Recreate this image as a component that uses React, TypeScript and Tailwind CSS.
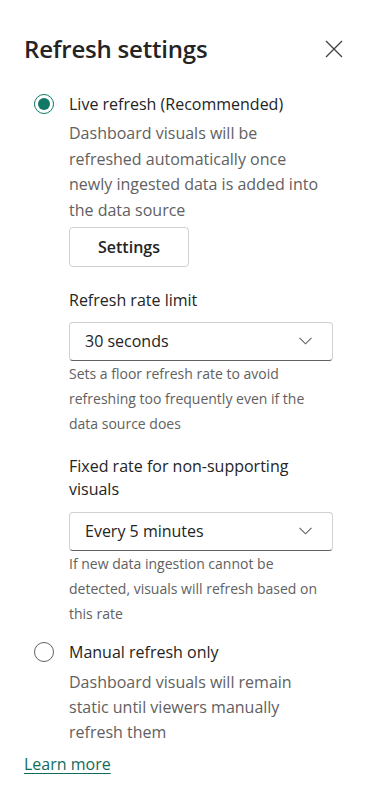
import React from "react";

const font = { fontFamily: '"Segoe UI", "Open Sans", "Noto Sans", sans-serif' };

function Chevron() {
  return (
    <svg width="13" height="8" viewBox="0 0 13 8" fill="none">
      <path d="M0.5 0.8 L6.5 6.8 L12.5 0.8" stroke="#616161" strokeWidth="1.1" />
    </svg>
  );
}

function Select({ value }: { value: string }) {
  return (
    <div className="flex h-[39px] w-[264px] items-center justify-between rounded-[4px] border border-[#d1d1d1] border-b-[#616161] bg-white pl-[15px] pr-[20px] text-[16px] text-[#242424]">
      <span>{value}</span>
      <Chevron />
    </div>
  );
}

export default function App() {
  return (
    <div className="min-h-[798px] w-[368px] bg-white px-6 pt-[33px] text-[#242424]" style={font}>
      <div className="flex h-8 items-center justify-between">
        <h1 className="text-[24px] font-semibold leading-8 tracking-[-0.2px]">Refresh settings</h1>
        <svg width="18" height="18" viewBox="0 0 18 18" className="mr-[1px]">
          <path d="M1 1 L17 17 M17 1 L1 17" stroke="#424242" strokeWidth="1.3" />
        </svg>
      </div>

      <div className="mt-[27px] flex h-6 items-center">
        <div className="ml-[10px] flex h-5 w-5 items-center justify-center rounded-full border-[1.5px] border-[#117865]">
          <div className="h-3 w-3 rounded-full bg-[#117865]" />
        </div>
        <span className="ml-[15px] text-[16px] leading-6">Live refresh (Recommended)</span>
      </div>

      <div className="ml-[45px]">
        <p className="mt-[5px] whitespace-nowrap text-[16px] leading-[25.7px] text-[#616161]">
          Dashboard visuals will be
          <br />
          refreshed automatically once
          <br />
          newly ingested data is added into
          <br />
          the data source
        </p>
        <button className="mt-[3px] flex h-10 w-[120px] items-center justify-center rounded-[4px] border border-[#d1d1d1] bg-white text-[16px] font-semibold text-[#242424]">
          Settings
        </button>

        <div className="mt-[21px] text-[16px] leading-6">Refresh rate limit</div>
        <div className="mt-[10px]">
          <Select value="30 seconds" />
        </div>
        <p className="whitespace-nowrap text-[14px] leading-[25px] text-[#616161]">
          Sets a floor refresh rate to avoid
          <br />
          refreshing too frequently even if the
          <br />
          data source does
        </p>

        <div className="mt-[19px] whitespace-nowrap text-[16px] leading-[23.5px]">
          Fixed rate for non-supporting
          <br />
          visuals
        </div>
        <div className="mt-[10px]">
          <Select value="Every 5 minutes" />
        </div>
        <p className="whitespace-nowrap text-[14px] leading-[25px] text-[#616161]">
          If new data ingestion cannot be
          <br />
          detected, visuals will refresh based on
          <br />
          this rate
        </p>
      </div>

      <div className="mt-[14px] flex h-6 items-center">
        <div className="ml-[10px] h-5 w-5 rounded-full border border-[#616161]" />
        <span className="ml-[15px] text-[16px] leading-6">Manual refresh only</span>
      </div>
      <p className="ml-[45px] mt-[6px] whitespace-nowrap text-[16px] leading-[25px] text-[#616161]">
        Dashboard visuals will remain
        <br />
        static until viewers manually
        <br />
        refresh them
      </p>
      <a className="mt-[7px] block text-[16px] leading-6 text-[#0f6c5d] underline underline-offset-[3px]" href="#">
        Learn more
      </a>
    </div>
  );
}
